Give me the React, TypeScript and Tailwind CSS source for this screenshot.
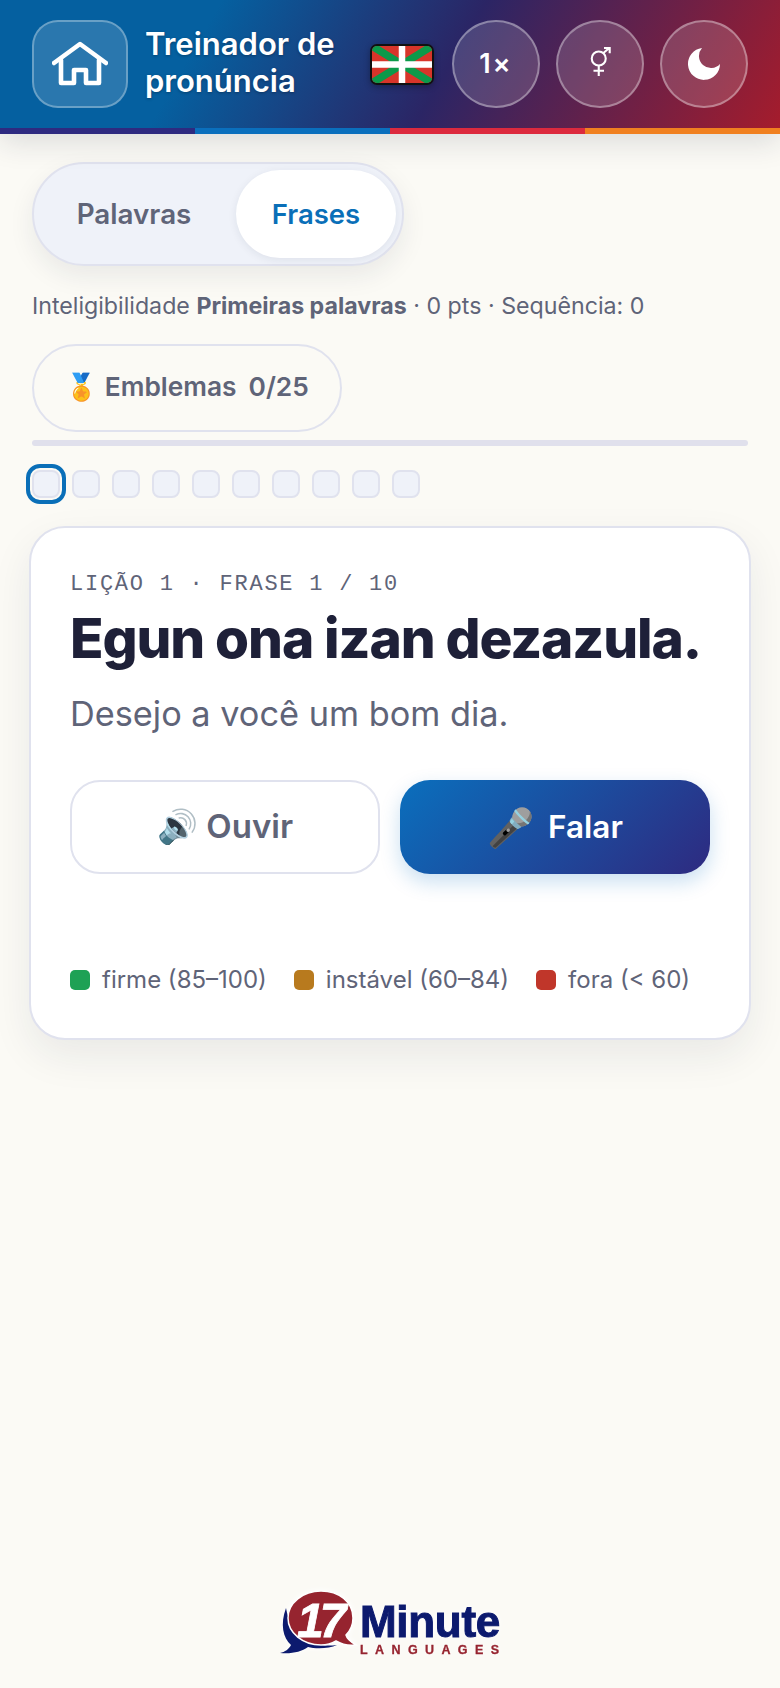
const steps = [0, 1, 2, 3, 4, 5, 6, 7, 8, 9];

function HomeIcon() {
  return (
    <svg width="56" height="46" viewBox="0 0 56 46" fill="none" stroke="white" strokeWidth="4.6" strokeLinecap="round" strokeLinejoin="round">
      <path d="M2 22 L28 3 L54 22" />
      <path d="M9 19 V42 H22 V29 H34 V42 H47 V19" />
    </svg>
  );
}

function GenderIcon() {
  return (
    <svg width="21" height="30" viewBox="0 0 24 34" fill="none" stroke="white" strokeWidth="2.4" className="mb-[5px]">
      <circle cx="10" cy="13" r="8" />
      <path d="M10 21 V33 M4 27 H16" />
      <path d="M15 7 L22 1 M16 1 H22.5 V7" />
    </svg>
  );
}

function MoonIcon() {
  return (
    <svg width="32" height="32" viewBox="0 0 32 32" fill="white">
      <path d="M14 0 A16 16 0 1 0 32 16 A11.5 11.5 0 0 1 14 0 Z" />
    </svg>
  );
}

function BasqueFlag() {
  return (
    <div className="h-[41px] w-[64px] shrink-0 overflow-hidden rounded-[7px] border-2 border-[#111] shadow-[0_2px_6px_rgba(0,0,0,0.3)]">
      <svg width="60" height="37" viewBox="0 0 60 37" className="block">
        <rect width="60" height="37" fill="#d8352a" />
        <path d="M0 0 L60 37 M60 0 L0 37" stroke="#0c9a4a" strokeWidth="7.5" />
        <path d="M30 0 V37 M0 18.5 H60" stroke="white" strokeWidth="6.5" />
      </svg>
    </div>
  );
}

function Logo() {
  return (
    <svg width="232" height="70" viewBox="0 0 232 70" className="drop-shadow-[0_0_3px_white]">
      <path d="M9 20 C3 36 6 50 14 57 C12 61 8 64 3 65 C15 66 24 64 31 59 C38 61 52 61 60 57 C36 60 14 50 9 20 Z" fill="#0c1a6e" />
      <path d="M44 3 C62 3 76 14 76 30 C76 37 73 43 69 47 C70 51 74 54 79 57 C71 58 64 56 59 53 C54 56 49 57 44 57 C26 57 11 45 11 30 C11 15 26 3 44 3 Z" fill="#96242f" stroke="white" strokeWidth="1.5" />
      <text x="20" y="49" fill="white" stroke="white" strokeWidth="0.8" fontFamily="Liberation Sans, sans-serif" fontWeight="700" fontStyle="italic" fontSize="48" letterSpacing="-4">17</text>
      <text x="83" y="49" fill="#0c1a6e" stroke="#0c1a6e" strokeWidth="1" fontFamily="Liberation Sans, sans-serif" fontWeight="700" fontSize="44" letterSpacing="-0.3">Minute</text>
      <text x="83" y="66" fill="#96242f" stroke="#96242f" strokeWidth="0.3" fontFamily="Liberation Sans, sans-serif" fontWeight="700" fontSize="12.5" letterSpacing="7.4">LANGUAGES</text>
    </svg>
  );
}

function RoundButton({ children }: { children: React.ReactNode }) {
  return (
    <button className="flex h-[88px] w-[88px] shrink-0 items-center justify-center rounded-full border-2 border-white/35 bg-white/15 text-white">
      {children}
    </button>
  );
}

function LegendItem({ color, label }: { color: string; label: string }) {
  return (
    <div className="flex items-center gap-[12px]">
      <span className={`h-[20px] w-[20px] rounded-[5px] ${color}`} />
      <span>{label}</span>
    </div>
  );
}

export default function App() {
  return (
    <div className="flex min-h-[1688px] flex-col bg-[#fbfaf5] font-['Inter',sans-serif] text-[#5f6478]">
      {/* Header */}
      <header className="relative shadow-[0_8px_28px_rgba(30,33,64,0.14)]">
        <div className="flex h-[128px] items-center bg-[linear-gradient(120deg,#0560a0_0%,#0560a0_26%,#2b2565_57%,#a51c2c_100%)] pl-[32px] pr-[32px]">
          <button className="flex h-[88px] w-[96px] shrink-0 items-center justify-center rounded-[26px] border-2 border-white/30 bg-white/15">
            <HomeIcon />
          </button>
          <h1 className="mb-[4px] ml-[17px] w-[210px] shrink-0 text-[31px] font-semibold leading-[37px] text-white [text-shadow:0_1px_3px_rgba(0,0,0,0.3)]">
            Treinador de pronúncia
          </h1>
          <div className="ml-auto flex items-center gap-[16px]">
            <div className="mr-[2px]">
              <BasqueFlag />
            </div>
            <RoundButton>
              <span className="text-[27px] font-semibold tracking-[2px]">1×</span>
            </RoundButton>
            <RoundButton>
              <GenderIcon />
            </RoundButton>
            <RoundButton>
              <MoonIcon />
            </RoundButton>
          </div>
        </div>
        <div className="grid h-[6px] grid-cols-4">
          <div className="bg-[#2e2a80]" />
          <div className="bg-[#0a6fbd]" />
          <div className="bg-[#dc2a3e]" />
          <div className="bg-[#f08020]" />
        </div>
      </header>

      <main className="flex flex-col px-[32px] pt-[28px]">
        {/* Mode switch */}
        <div className="flex h-[104px] w-[372px] items-center gap-[8px] rounded-full border-2 border-[#e0e2ee] bg-[#eff2f9] px-[6px] shadow-[0_10px_26px_rgba(30,33,64,0.08)]">
          <button className="flex h-[88px] w-[188px] items-center justify-center rounded-full pt-[2px] text-[27.8px] font-semibold">Palavras</button>
          <button className="flex h-[88px] w-[160px] items-center justify-center rounded-full bg-white pt-[2px] text-[27.5px] font-semibold text-[#0a6fb8] shadow-[0_2px_8px_rgba(30,33,64,0.08)]">Frases</button>
        </div>

        <p className="mt-[25px] text-[23.2px] leading-[30px]">
          Inteligibilidade <strong className="font-bold">Primeiras palavras</strong> · 0 pts · Sequência: 0
        </p>

        <button className="mt-[23px] flex h-[88px] w-[310px] items-center justify-center gap-[12px] rounded-full border-2 border-[#e0e2ee] pb-[3px] text-[26.3px] font-semibold">
          <span>🏅 Emblemas</span>
          <span>0/25</span>
        </button>

        <div className="mt-[8px] h-[6px] w-[716px] rounded-full bg-[#e0e0ec]" />

        <div className="mt-[24px] flex gap-[12px]">
          {steps.map((step) => (
            <span
              key={step}
              className={`h-[28px] w-[28px] rounded-[8px] border-2 border-[#e0e2ee] bg-[#eff2f9] ${step === 0 ? "outline-[4px] outline-offset-[2px] outline-[#0a6fb8]" : ""}`}
            />
          ))}
        </div>
      </main>

      {/* Lesson card */}
      <section className="mx-[29px] mt-[28px] h-[514px] rounded-[36px] border-2 border-[#e0e2ee] bg-white px-[39px] pt-[42px] shadow-[0_16px_40px_rgba(30,33,64,0.08)]">
        <p className="font-['Liberation_Mono',monospace] text-[22px] leading-[30px] tracking-[1.75px]">LIÇÃO 1 · FRASE 1 / 10</p>
        <h2 className="mt-[4px] whitespace-nowrap text-[55px] font-extrabold leading-[68px] tracking-[-1.1px] text-[#1e2038]">Egun ona izan dezazula.</h2>
        <p className="mt-[19px] text-[34.3px] leading-[46px]">Desejo a você um bom dia.</p>

        <div className="mt-[43px] grid grid-cols-2 gap-[20px]">
          <button className="flex h-[94px] items-center justify-center rounded-[30px] border-2 border-[#e0e2ee] bg-white text-[33px] font-semibold">
            🔊 Ouvir
          </button>
          <button className="flex h-[94px] items-center justify-center gap-[14px] rounded-[30px] bg-[linear-gradient(135deg,#0a6fbd,#2e2a80)] text-[31.5px] font-semibold text-white shadow-[0_8px_20px_rgba(10,111,189,0.22)]">
            <span className="text-[38px] leading-none">🎤</span>
            <span>Falar</span>
          </button>
        </div>

        <div className="mt-[90px] flex items-center gap-[27px] text-[24px] leading-[32px]">
          <LegendItem color="bg-[#1ea155]" label="firme (85–100)" />
          <LegendItem color="bg-[#b87a1e]" label="instável (60–84)" />
          <LegendItem color="bg-[#c0362a]" label="fora (< 60)" />
        </div>
      </section>

      <footer className="mt-auto flex justify-center pb-[30px] pl-[6px]">
        <Logo />
      </footer>
    </div>
  );
}
